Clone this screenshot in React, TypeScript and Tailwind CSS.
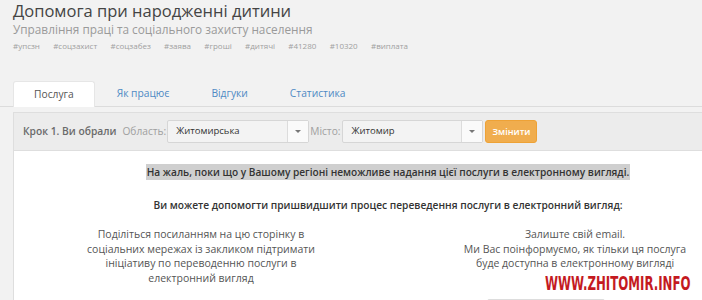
import React from "react";

const tags = ["#упсзн", "#соцзахист", "#соцзабез", "#заява", "#гроші", "#дитячі", "#41280", "#10320", "#виплата"];

function Caret() {
  return (
    <svg width="6" height="3" viewBox="0 0 6 3">
      <path d="M0 0 L6 0 L3 3 Z" fill="#777" />
    </svg>
  );
}

function SelectBox({ value, width }: { value: string; width: string }) {
  return (
    <div className={`flex h-[23px] ${width} border border-[#d6d6d6] rounded-[2px] bg-[#f3f3f3]`}>
      <div className="flex-1 flex items-center pl-[8px] text-[9.5px] text-[#333]">{value}</div>
      <div className="w-[21px] flex items-center justify-center border-l border-[#dcdcdc] bg-[#fafafa]">
        <Caret />
      </div>
    </div>
  );
}

export default function App() {
  return (
    <div className="relative w-[702px] h-[300px] overflow-hidden bg-[#f2f2f2] font-['Open_Sans',sans-serif]">
      <div className="pl-[13px] pt-[1px]">
        <h1 className="text-[16.5px] leading-[20px] text-[#444] font-normal">Допомога при народженні дитини</h1>
        <div className="text-[11.8px] leading-[17px] text-[#9a9a9a]">Управління праці та соціального захисту населення</div>
        <div className="flex gap-[13.3px] text-[8px] leading-[12px] text-[#a0a0a0] mt-[2px]">
          {tags.map((t) => (
            <span key={t}>{t}</span>
          ))}
        </div>
      </div>

      <div className="mt-[29px] flex border-b border-[#dcdcdc] pl-[13px] h-[26px]">
        <div className="px-[20px] h-[26px] bg-white border border-b-0 border-[#e6e6e6] rounded-t-[3px] flex items-center text-[10.25px] text-[#555] mr-[2px]">
          Послуга
        </div>
        {["Як працює", "Відгуки", "Статистика"].map((t) => (
          <div key={t} className="px-[20px] h-[25px] flex items-center text-[10.25px] text-[#4f8ac4] mr-[2px]">
            {t}
          </div>
        ))}
      </div>

      <div className="ml-[13px] mt-[5px] w-[750px] border border-[#dedede]">
        <div className="h-[38px] bg-[#ececec] border-b border-[#dedede] flex items-center pl-[9px]">
          <span className="text-[10.25px] font-semibold text-[#6a6a6a]">Крок 1. Ви обрали</span>
          <span className="text-[10.2px] text-[#a0a0a0] ml-[6px] mr-[1px]">Область:</span>
          <SelectBox value="Житомирська" width="w-[142px]" />
          <span className="text-[10.2px] text-[#a0a0a0] ml-[1px] mr-[2px]">Місто:</span>
          <SelectBox value="Житомир" width="w-[141px]" />
          <button className="ml-[2px] h-[23px] w-[52px] rounded-[3px] bg-[#f0ad4e] border border-[#eea236] text-white text-[9px] font-semibold">
            Змінити
          </button>
        </div>
        <div className="bg-white h-[200px] pt-[11px]">
          <div className="text-center leading-[16px]">
            <span className="inline-block bg-[#cfcfcf] text-[10.15px] font-semibold text-[#333] leading-[16px] px-[1px]">
              На жаль, поки що у Вашому регіоні неможливе надання цієї послуги в електронному вигляді.
            </span>
          </div>
          <div className="text-center text-[10.2px] font-semibold text-[#333] leading-[14px] mt-[18px]">
            Ви можете допомогти пришвидшити процес переведення послуги в електронний вигляд:
          </div>
          <div className="grid grid-cols-2 mt-[15px] text-[10.5px] leading-[14.6px] text-[#555] text-center">
            <div className="flex justify-center">
              <div>
                Поділіться посиланням на цю сторінку в
                <br />
                соціальних мережах із закликом підтримати
                <br />
                ініціативу по переводенню послуги в
                <br />
                електронний вигляд
              </div>
            </div>
            <div className="flex flex-col">
              <div>
                Залиште свій email.
                <br />
                Ми Вас поінформуємо, як тільки ця послуга
                <br />
                буде доступна в електронному вигляді
              </div>
              <div className="mt-[28px] ml-[99px] w-[118px] h-[24px] border border-[#ddd] rounded-[2px]" />
            </div>
          </div>
        </div>
      </div>

      <div className="absolute left-[545px] top-[273px] text-[#c41a1f] font-bold font-['DejaVu_Sans_Condensed','DejaVu_Sans',sans-serif] text-[20px] leading-[20px] origin-left scale-x-[0.655] whitespace-nowrap">
        WWW.ZHITOMIR.INFO
      </div>
    </div>
  );
}
